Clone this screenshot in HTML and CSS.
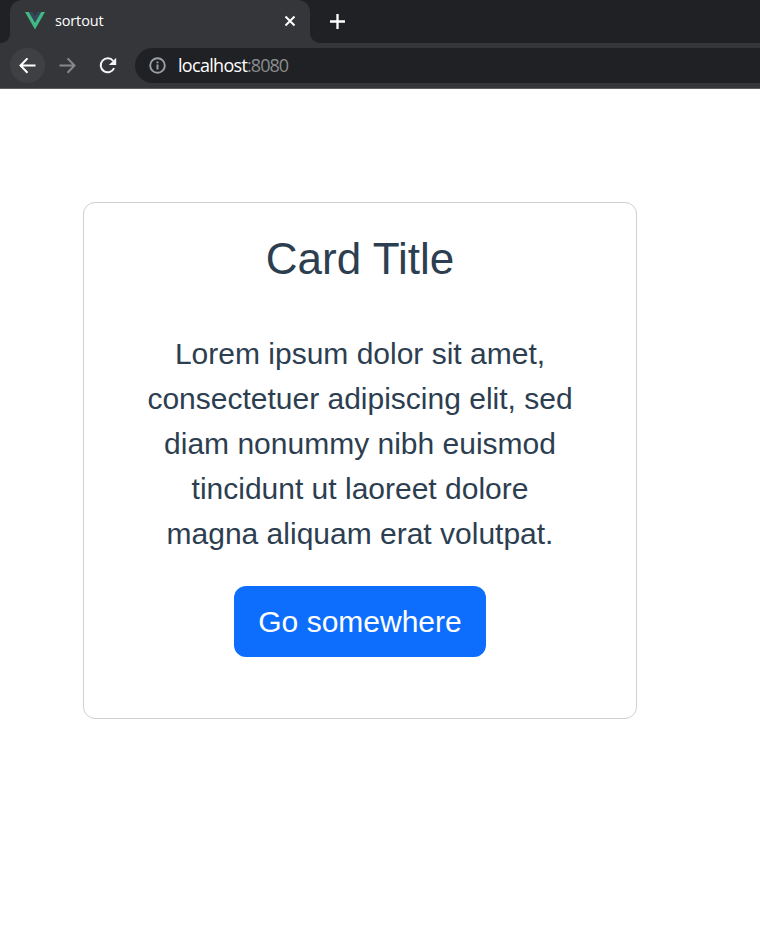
FILE: index.html
```html
<!DOCTYPE html>
<html lang="en">
<head>
<meta charset="utf-8">
<title>sortout</title>
<link rel="stylesheet" href="styles.css">
</head>
<body>
<header class="browser">
  <div class="tabs">
    <div class="edge"></div>
    <div class="tab">
      <svg class="logo" width="20" height="18" viewBox="0 0 20 18"><path fill="#41b883" d="M0 0h4l6 10.500L16 0h4L10 17.500z"/><path fill="#35495e" d="M4 0h3.600L10 4.200 12.400 0H16l-6 10.500z"/></svg>
      <span class="tab-name">sortout</span>
      <svg class="close" width="12" height="12" viewBox="0 0 12 12" fill="none" stroke="#fff" stroke-width="2"><path d="M1.500 1.500l9 9M10.500 1.500l-9 9"/></svg>
    </div>
    <div class="tab-rest">
      <svg width="15" height="15" viewBox="0 0 15 15" fill="none" stroke="#fff" stroke-width="2.300"><path d="M7.500 0v15M0 7.500h15"/></svg>
    </div>
  </div>
  <div class="toolbar">
    <div class="nav back"><svg width="17" height="16" viewBox="0 0 17 16" fill="none" stroke="#fff" stroke-width="2"><path d="M16.500 7.500H1.700M8.500.3L1.500 7.500l7 7.200"/></svg></div>
    <div class="nav"><svg width="17" height="16" viewBox="0 0 17 16" fill="none" stroke="#86888a" stroke-width="2"><path d="M.5 7.500h14.800M8.500.3l7 7.200-7 7.200"/></svg></div>
    <div class="nav"><svg width="18" height="18" viewBox="0 0 18 18"><path d="M14.200 4A7 7 0 1 0 15.100 11.200" fill="none" stroke="#f1f3f4" stroke-width="2"/><path fill="#f1f3f4" d="M17.200.7v7.300H9.900z"/></svg></div>
    <div class="address">
      <svg width="17" height="17" viewBox="0 0 17 17" fill="none" stroke="#9aa0a6"><circle cx="8.500" cy="8.500" r="7.300" stroke-width="1.900"/><path stroke-width="2" d="M8.500 7.600v5M8.500 4.400v1.900"/></svg>
      <span class="url">localhost<span class="port">:8080</span></span>
    </div>
  </div>
</header>
<main class="page">
  <section class="card">
    <h1 class="title">Card Title</h1>
    <p class="text">Lorem ipsum dolor sit amet,<br>consectetuer adipiscing elit, sed<br>diam nonummy nibh euismod<br>tincidunt ut laoreet dolore<br>magna aliquam erat volutpat.</p>
    <a class="button">Go somewhere</a>
  </section>
</main>
</body>
</html>
```
FILE: styles.css
```css
* { box-sizing: border-box; }
body {
  margin: 0;
  height: 928px;
  overflow: hidden;
  background: #fff;
  color: #2c3e50;
  font-family: "Liberation Sans", Arial, sans-serif;
}
svg { display: block; flex: none; }
.browser {
  height: 89px;
  background: #35363a;
  border-bottom: 1px solid #5d5e62;
  font-family: "Open Sans", sans-serif;
  color: #fff;
}
.tabs { display: flex; height: 43px; }
.edge { width: 10px; background: #202124; border-bottom-right-radius: 9px; }
.tab {
  display: flex;
  align-items: center;
  width: 300px;
  padding: 0 14px 1px 15px;
  background: linear-gradient(#202124, #202124) top / 100% 14px no-repeat;
  position: relative;
  isolation: isolate;
}
.tab::before {
  content: "";
  position: absolute;
  inset: 0;
  z-index: -1;
  background: #35363a;
  border-radius: 12px 12px 0 0;
}
.tab-name { flex: 1; margin-left: 10px; padding-bottom: 2px; font-size: 14.5px; letter-spacing: -0.15px; }
.tab-rest {
  flex: 1;
  display: flex;
  align-items: center;
  padding: 0 0 1px 20px;
  background: #202124;
  border-bottom-left-radius: 10px;
}
.toolbar { display: flex; padding: 5px 0 5px 10px; gap: 5px; }
.nav {
  display: flex;
  align-items: center;
  justify-content: center;
  width: 35px;
  height: 35px;
  border-radius: 50%;
}
.back { background: #3f4043; }
.address {
  flex: 1;
  display: flex;
  align-items: center;
  margin-left: 5px;
  padding-left: 14px;
  gap: 12px;
  background: #202124;
  border-radius: 18px 0 0 18px;
}
.url { font-size: 18px; line-height: 35px; letter-spacing: -0.7px; }
.port { color: #8b8d90; letter-spacing: -1px; }
.page { padding: 113px 123px 0 83px; }
.card {
  display: flex;
  flex-direction: column;
  align-items: center;
  height: 517px;
  padding-top: 29px;
  border: 1px solid #d0d0d1;
  border-radius: 12px;
  text-align: center;
}
.title { margin: 0 0 46px; font-size: 44px; line-height: 53px; font-weight: 400; }
.text { margin: 0 0 30px; font-size: 30px; line-height: 45px; white-space: nowrap; }
.button {
  width: 252px;
  height: 71px;
  padding: 13px 0;
  border-radius: 12px;
  background: #0d6efd;
  color: #fff;
  font-size: 30px;
  line-height: 45px;
}
```
